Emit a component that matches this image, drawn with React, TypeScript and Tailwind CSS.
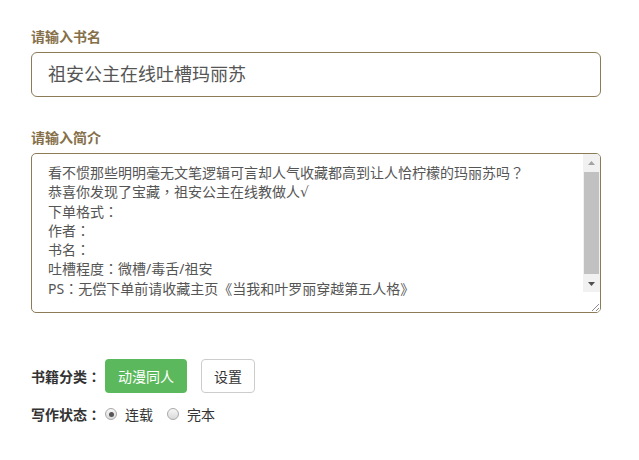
import React from 'react';

const INTRO = [
  '看不惯那些明明毫无文笔逻辑可言却人气收藏都高到让人恰柠檬的玛丽苏吗？',
  '恭喜你发现了宝藏，祖安公主在线教做人√',
  '下单格式：',
  '作者：',
  '书名：',
  '吐槽程度：微槽/毒舌/祖安',
  'PS：无偿下单前请收藏主页《当我和叶罗丽穿越第五人格》',
];

const font = { fontFamily: '"Noto Sans", "Noto Sans CJK SC", sans-serif' };

// full-width punctuation sits centred in the reference, so borrow the TC forms
const T: React.FC<{ text: string }> = ({ text }) => (
  <>
    {text.split(/([：？，√])/).map((part, i) =>
      part === '√' ? (
        <span key={i} className="font-['DejaVu_Sans',sans-serif]">{part}</span>
      ) : /[：？，]/.test(part) ? (
        <span key={i} className="font-['Noto_Sans_CJK_TC',sans-serif]">{part}</span>
      ) : (
        <React.Fragment key={i}>{part}</React.Fragment>
      )
    )}
  </>
);

const Radio: React.FC<{ checked?: boolean; label: string }> = ({ checked, label }) => (
  <label className="flex items-center gap-[8px]">
    <span className="w-[12px] h-[12px] rounded-full border border-[#a9a9a9] bg-gradient-to-b from-[#f7f7f7] to-[#d9d9d9] flex items-center justify-center">
      {checked && <span className="w-[5px] h-[5px] rounded-full bg-[#555]" />}
    </span>
    <span className="text-[14px] text-[#333]">{label}</span>
  </label>
);

const App: React.FC = () => {
  return (
    <div className="w-[639px] h-[460px] bg-white" style={font}>
      <div className="w-[570px] ml-[31px] pt-[27px]">
        <div className="h-[20px] leading-[20px] text-[14px] font-bold text-[#86704a]">请输入书名</div>
        <div className="mt-[5px] h-[45px] border border-[#8c7b57] rounded-[6px] flex items-center pl-[16px] text-[18px] text-[#555]">
          祖安公主在线吐槽玛丽苏
        </div>

        <div className="mt-[31px] h-[20px] leading-[20px] text-[14px] font-bold text-[#86704a]">请输入简介</div>
        <div className="mt-[5px] h-[160px] border border-[#8c7b57] rounded-[5px] flex overflow-hidden">
          <div className="flex-1 pl-[16px] pt-[9px] text-[14px] leading-[18.3px] text-[#555]">
            {INTRO.map((line, i) => (
              <div key={i}>
                <T text={line} />
              </div>
            ))}
          </div>
          <div className="w-[17px] flex flex-col">
            <div className="h-[17px] bg-[#f1f1f1] flex items-center justify-center">
              <svg width="7" height="4" viewBox="0 0 7 4"><path d="M3.5 0L7 4H0z" fill="#a3a3a3" /></svg>
            </div>
            <div className="h-[104px] bg-[#f1f1f1] px-[1px] py-px">
              <div className="h-full bg-[#c1c1c1]" />
            </div>
            <div className="h-[17px] bg-[#f1f1f1] flex items-center justify-center">
              <svg width="7" height="4" viewBox="0 0 7 4"><path d="M0 0H7L3.5 4z" fill="#505050" /></svg>
            </div>
            <div className="flex-1 bg-white flex items-end justify-end">
              <svg width="8" height="8" viewBox="0 0 8 8" className="mb-[1px] mr-[1px]">
                <path d="M1 8L8 1M5 8L8 5" stroke="#8a8a8a" strokeWidth="1" />
              </svg>
            </div>
          </div>
        </div>

        <div className="mt-[46px] flex items-center h-[34px]">
          <span className="w-[74px] text-[14px] font-bold text-[#333]">
            <T text="书籍分类：" />
          </span>
          <button className="w-[82px] h-[34px] rounded-[4px] bg-[#5cb85c] text-white text-[14px]">动漫同人</button>
          <button className="ml-[14px] w-[54px] h-[34px] rounded-[4px] border border-[#cccccc] bg-white text-[14px] text-[#333]">设置</button>
        </div>

        <div className="mt-[11px] h-[20px] flex items-center">
          <span className="w-[74px] text-[14px] font-bold text-[#333]">
            <T text="写作状态：" />
          </span>
          <div className="flex items-center gap-[14px]">
            <Radio checked label="连载" />
            <Radio label="完本" />
          </div>
        </div>
      </div>
    </div>
  );
};

export default App;
